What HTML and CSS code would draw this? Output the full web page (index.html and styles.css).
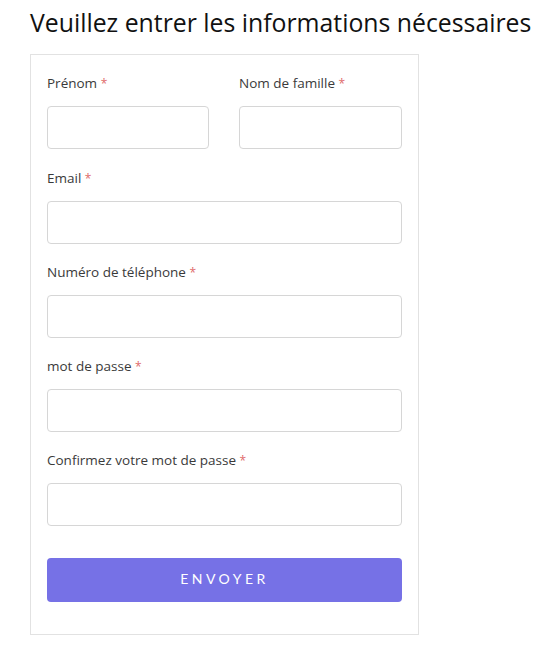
FILE: index.html
```html
<!DOCTYPE html>
<html lang="fr">
<head>
<meta charset="utf-8">
<link rel="stylesheet" href="styles.css">
</head>
<body>
<div class="page">
  <h1 class="title">Veuillez entrer les informations nécessaires</h1>
  <form class="card">
    <div class="row">
      <div class="field">
        <label class="label">Prénom <span class="req">*</span></label>
        <input class="input" type="text">
      </div>
      <div class="field">
        <label class="label">Nom de famille <span class="req">*</span></label>
        <input class="input" type="text">
      </div>
    </div>
    <div class="field">
      <label class="label">Email <span class="req">*</span></label>
      <input class="input" type="text">
    </div>
    <div class="field">
      <label class="label">Numéro de téléphone <span class="req">*</span></label>
      <input class="input" type="text">
    </div>
    <div class="field">
      <label class="label">mot de passe <span class="req">*</span></label>
      <input class="input" type="password">
    </div>
    <div class="field last">
      <label class="label">Confirmez votre mot de passe <span class="req">*</span></label>
      <input class="input" type="password">
    </div>
    <button class="submit" type="button">ENVOYER</button>
  </form>
</div>
</body>
</html>
```
FILE: styles.css
```css
* { box-sizing: border-box; }
body {
  margin: 0;
  background: #fff;
  font-family: "Open Sans", "Noto Sans", sans-serif;
}
.page {
  padding: 0 30px;
}
.title {
  margin: 0;
  padding-top: 5px;
  height: 54px;
  font-family: "Open Sans", sans-serif;
  font-weight: 400;
  font-size: 24.8px;
  line-height: 34px;
  color: #111;
  white-space: nowrap;
}
.card {
  width: 389px;
  border: 1px solid #e2e2e2;
  padding: 18px 16px 32px 16px;
  display: flex;
  flex-direction: column;
}
.row {
  display: grid;
  grid-template-columns: 162px 1fr;
  column-gap: 30px;
  margin-bottom: 1px;
}
.field {
  display: flex;
  flex-direction: column;
  margin-bottom: 18px;
}
.field.last { margin-bottom: 32px; }
.label {
  font-family: "Open Sans", sans-serif;
  font-size: 13.5px;
  line-height: 20px;
  height: 20px;
  color: #3a3a3a;
  margin-bottom: 13px;
}
.req {
  color: #e06a6a;
  font-size: 12px;
  line-height: 1;
}
.input {
  height: 43px;
  border: 1px solid #d6d6d6;
  border-radius: 4px;
  background: #fff;
  width: 100%;
}
.submit {
  height: 44px;
  border: none;
  border-radius: 4px;
  background: #7671e6;
  color: #fff;
  font-family: "Lato", sans-serif;
  font-size: 14px;
  letter-spacing: 3.5px;
  padding: 0 0 4px 0;
}
```
